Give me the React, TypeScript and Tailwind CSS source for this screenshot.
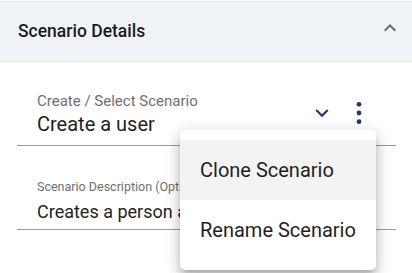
import React from "react";

const App: React.FC = () => {
  return (
    <div
      className="relative w-[412px] h-[273px] bg-white overflow-hidden"
      style={{ fontFamily: "Roboto, 'Liberation Sans', sans-serif" }}
    >
      {/* Accordion header */}
      <div className="mt-px flex h-[61px] items-center justify-between border-y border-[#e2e4e8] bg-[#eff2f7] pl-[18px] pr-[10px]">
        <span className="text-[17.5px] font-medium text-[#1b1b1b]">Scenario Details</span>
        <svg width="24" height="24" viewBox="0 0 24 24" className="mb-[8px]">
          <path d="M7.41 15.41 12 10.83l4.59 4.58L18 14l-6-6-6 6z" fill="#6b6b6b" />
        </svg>
      </div>

      <div className="pl-[17px] pr-4">
        {/* Scenario select */}
        <div className="mt-[30px] flex items-end border-b border-[#9a9a9a] pb-[9px] pl-5">
          <div className="flex flex-1 flex-col">
            <span className="text-[15px] leading-[18px] text-[#6f6f6f]">Create / Select Scenario</span>
            <span className="mt-[2px] text-[20px] leading-[24px] text-[#1f1f1f]">Create a user</span>
          </div>
          <svg width="26" height="26" viewBox="0 0 24 24" className="mb-[10px] mr-[11px]">
            <path d="M7.41 8.59 12 13.17l4.59-4.58L18 10l-6 6-6-6z" fill="#1e3a6b" />
          </svg>
          <svg width="26" height="26" viewBox="0 0 24 24" className="mb-[10px] mr-[24px]">
            <circle cx="12" cy="4" r="2.2" fill="#1e3a6b" />
            <circle cx="12" cy="12" r="2.2" fill="#1e3a6b" />
            <circle cx="12" cy="20" r="2.2" fill="#1e3a6b" />
          </svg>
        </div>

        {/* Description */}
        <div className="mt-[33px] border-b border-[#9a9a9a] pb-[5px] pl-5">
          <div className="text-[12.5px] leading-[16px] text-[#6f6f6f]">Scenario Description (Optional)</div>
          <div className="mt-[5px] text-[18px] leading-[24px] text-[#1f1f1f] whitespace-nowrap">
            Creates a person account
          </div>
        </div>
      </div>

      {/* Overflow menu */}
      <div className="absolute left-[180px] top-[130px] w-[196px] rounded-[5px] bg-white py-[10px] shadow-[0_5px_6px_-3px_rgba(0,0,0,0.2),0_8px_12px_1px_rgba(0,0,0,0.14),0_3px_16px_2px_rgba(0,0,0,0.12)]">
        <div className="flex h-[60px] items-center bg-[#f3f3f3] px-5 text-[20px] text-[#1f1f1f]">Clone Scenario</div>
        <div className="flex h-[60px] items-center px-5 text-[20px] text-[#1f1f1f]">Rename Scenario</div>
      </div>
    </div>
  );
};

export default App;
